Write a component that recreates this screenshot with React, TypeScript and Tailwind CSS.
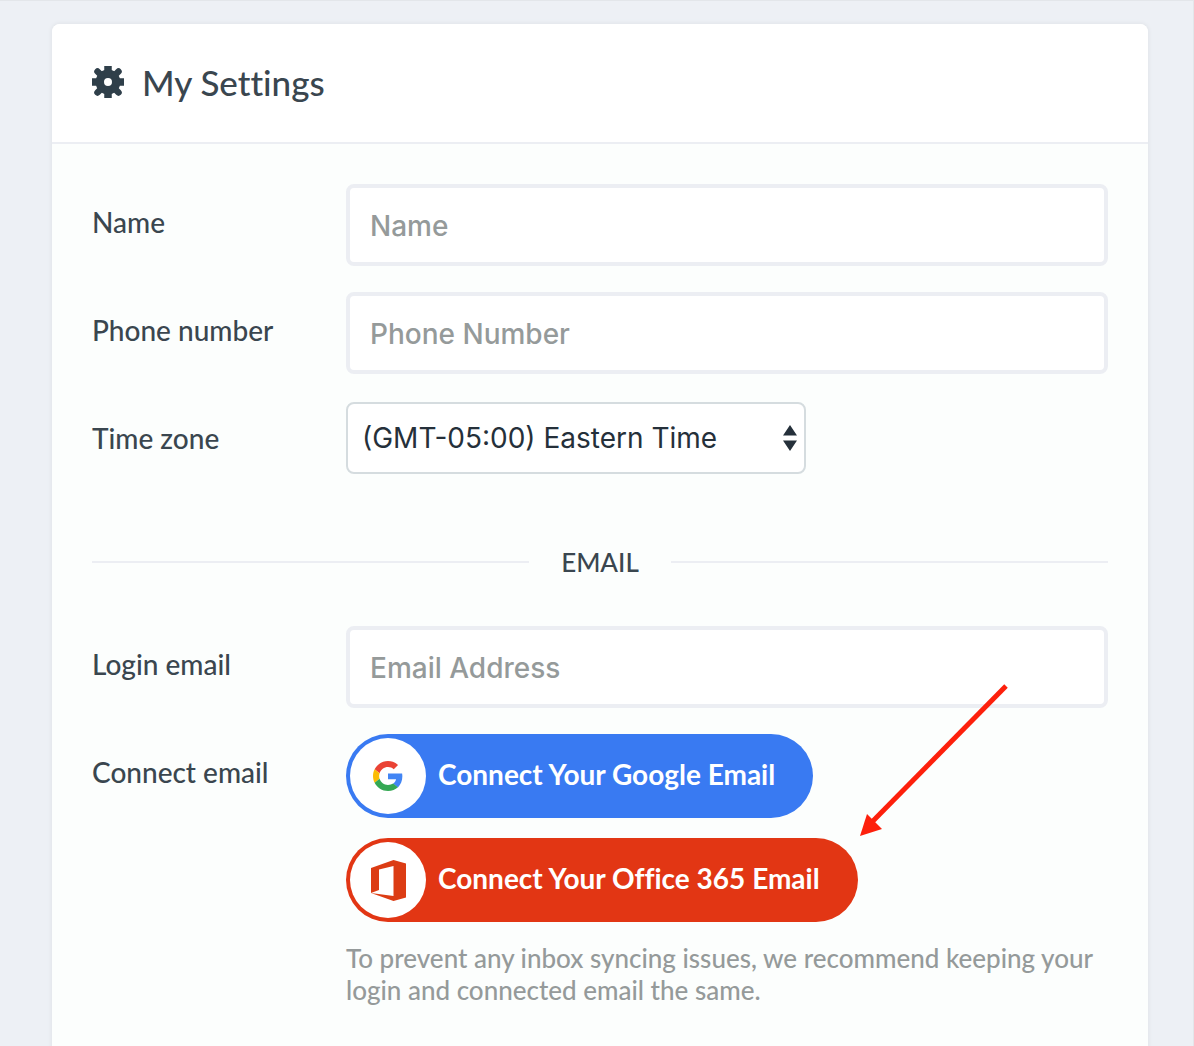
import { useState } from "react";
import type { ReactNode } from "react";

interface FieldRowProps {
  label: string;
  htmlFor: string;
  children: ReactNode;
}

interface TextFieldProps {
  id: string;
  label: string;
  type: "text" | "tel" | "email";
  placeholder: string;
}

interface ConnectButtonProps {
  provider: "google" | "office";
  id?: string;
}

function CogIcon() {
  return (
    <svg viewBox="0 0 32 32" className="h-8 w-8" fill="none" stroke="#2f3f4a" aria-hidden="true">
      <circle cx="16" cy="16" r="8.2" strokeWidth="8.400" />
      <path d="M16 0v8M16 24v8M0 16h8M24 16h8" strokeWidth="7.500" />
      <path d="M5.500 5.500l4 4M22.500 22.500l4 4M26.500 5.500l-4 4M9.500 22.500l-4 4" strokeWidth="6.500" strokeLinecap="round" />
    </svg>
  );
}

function GoogleIcon() {
  return (
    <svg viewBox="0 0 48 48" className="h-[30px] w-[30px]" aria-hidden="true">
      <path fill="#EA4335" d="M24 9.500c3.540 0 6.710 1.220 9.210 3.600l6.850-6.850C35.900 2.380 30.470 0 24 0 14.620 0 6.510 5.380 2.560 13.220l7.980 6.190C12.430 13.720 17.740 9.500 24 9.500z" />
      <path fill="#4285F4" d="M46.980 24.550c0-1.570-.15-3.090-.38-4.550H24v9.020h12.940c-.58 2.960-2.260 5.480-4.780 7.180l7.730 6c4.510-4.180 7.090-10.360 7.090-17.650z" />
      <path fill="#FBBC05" d="M10.530 28.590c-.48-1.450-.76-2.990-.76-4.590s.27-3.140.76-4.590l-7.980-6.190C.92 16.460 0 20.120 0 24c0 3.880.92 7.540 2.560 10.780l7.970-6.190z" />
      <path fill="#34A853" d="M24 48c6.480 0 11.930-2.130 15.890-5.810l-7.730-6c-2.150 1.450-4.920 2.300-8.160 2.300-6.260 0-11.570-4.220-13.470-9.910l-7.980 6.190C6.510 42.620 14.620 48 24 48z" />
    </svg>
  );
}

function OfficeIcon() {
  return (
    <svg viewBox="0 0 35 41" className="h-[41px] w-[35px]" fill="#dc3c14" aria-hidden="true">
      <path d="M0 33V8L22.500 0 35 3.500v34L22.500 41 0 33l22.500 3V6L8 9.500v20.500z" />
    </svg>
  );
}

function FieldRow({ label, htmlFor, children }: FieldRowProps) {
  return (
    <div className="flex items-start">
      <label htmlFor={htmlFor} className="w-[254px] shrink-0 pt-5 text-[28px] leading-9">
        {label}
      </label>
      <div className="min-w-0 flex-1">{children}</div>
    </div>
  );
}

function TextField({ id, label, type, placeholder }: TextFieldProps) {
  return (
    <FieldRow label={label} htmlFor={id}>
      <input
        id={id}
        type={type}
        placeholder={placeholder}
        className="block h-[82px] w-full rounded-lg border-4 border-[#eceef3] bg-white px-5 pt-0.5 font-[Inter,sans-serif] text-[28px] outline-none placeholder:text-[#959a9a]"
      />
    </FieldRow>
  );
}

function ConnectButton({ provider, id }: ConnectButtonProps) {
  const colors = {
    google: "bg-[#397af2]",
    office: "bg-[#e23614]",
  };

  const labels = {
    google: "Connect Your Google Email",
    office: "Connect Your Office 365 Email",
  };

  return (
    <button
      id={id}
      type="button"
      className={`flex h-[84px] items-center gap-3 rounded-full pr-[38px] pl-1 text-[28px] font-bold text-white ${colors[provider]}`}
    >
      <span className="flex h-[76px] w-[76px] shrink-0 items-center justify-center rounded-full bg-white">
        {provider === "google" ? <GoogleIcon /> : <OfficeIcon />}
      </span>
      <span className="pb-1 whitespace-nowrap">{labels[provider]}</span>
    </button>
  );
}

function TimeZoneSelect() {
  const [zone, setZone] = useState("eastern");

  return (
    <div className="relative w-[460px] py-0.5">
      <select
        id="time-zone"
        value={zone}
        onChange={(e) => setZone(e.target.value)}
        className="block h-[72px] w-full appearance-none rounded-lg border-2 border-[#d5dcdf] bg-white pr-12 pl-3.5 font-[Inter,sans-serif] text-[28px] font-normal text-[#25303a]"
      >
        <option value="eastern">(GMT-05:00) Eastern Time</option>
        <option value="central">(GMT-06:00) Central Time</option>
        <option value="pacific">(GMT-08:00) Pacific Time</option>
      </select>
      <svg
        viewBox="0 0 14 28"
        className="pointer-events-none absolute top-6 right-[9px] h-7 w-3.5"
        fill="#25303a"
        aria-hidden="true"
      >
        <path d="M7 1l7 10.500H0zM7 27l7-10.500H0z" />
      </svg>
    </div>
  );
}

function Arrow() {
  return (
    <svg
      viewBox="0 0 148 152"
      className="pointer-events-none absolute -top-[50px] left-[514px] h-[152px] w-[148px]"
      aria-hidden="true"
    >
      <path d="M146 2L12 138" stroke="#fd200c" strokeWidth="5" />
      <path d="M0 152l7-22 15 15z" fill="#fd200c" />
    </svg>
  );
}

export default function App() {
  return (
    <div className="min-h-screen border-t border-r border-[#e3e6ea] bg-[#edf0f5] pt-[23px] pr-[45px] pl-[52px] font-[Lato,sans-serif] font-medium text-[#3a464f] [font-variant-ligatures:no-common-ligatures]">
      <main className="rounded-t-lg bg-[#fcfefd] pb-10 shadow-[0_0_3px_2px_#e5e8ed]">
        <header className="flex items-center gap-[18px] rounded-t-lg border-b-2 border-[#eceef3] bg-white px-10 pt-[35px] pb-[37px]">
          <CogIcon />
          <h1 className="text-[35px] leading-[46px]">My Settings</h1>
        </header>

        <form className="px-10 pt-10">
          <div className="flex flex-col gap-[26px]">
            <TextField id="name" label="Name" type="text" placeholder="Name" />
            <TextField id="phone" label="Phone number" type="tel" placeholder="Phone Number" />
            <FieldRow label="Time zone" htmlFor="time-zone">
              <TimeZoneSelect />
            </FieldRow>
          </div>

          <div className="mt-[68px] mb-[46px] flex items-center gap-8">
            <div className="h-0.5 flex-1 bg-[#eceef3]" />
            <h2 className="text-[26px] leading-9">EMAIL</h2>
            <div className="h-0.5 flex-1 bg-[#eceef3]" />
          </div>

          <div className="flex flex-col gap-[26px]">
            <TextField id="email" label="Login email" type="email" placeholder="Email Address" />
            <FieldRow label="Connect email" htmlFor="connect-google">
              <div className="relative flex flex-col items-start gap-5">
                <ConnectButton id="connect-google" provider="google" />
                <ConnectButton provider="office" />
                <Arrow />
              </div>
              <p className="mt-5 text-[26px] leading-8 text-[#959a9a]">
                To prevent any inbox syncing issues, we recommend keeping your login and connected email the same.
              </p>
            </FieldRow>
          </div>
        </form>
      </main>
    </div>
  );
}
